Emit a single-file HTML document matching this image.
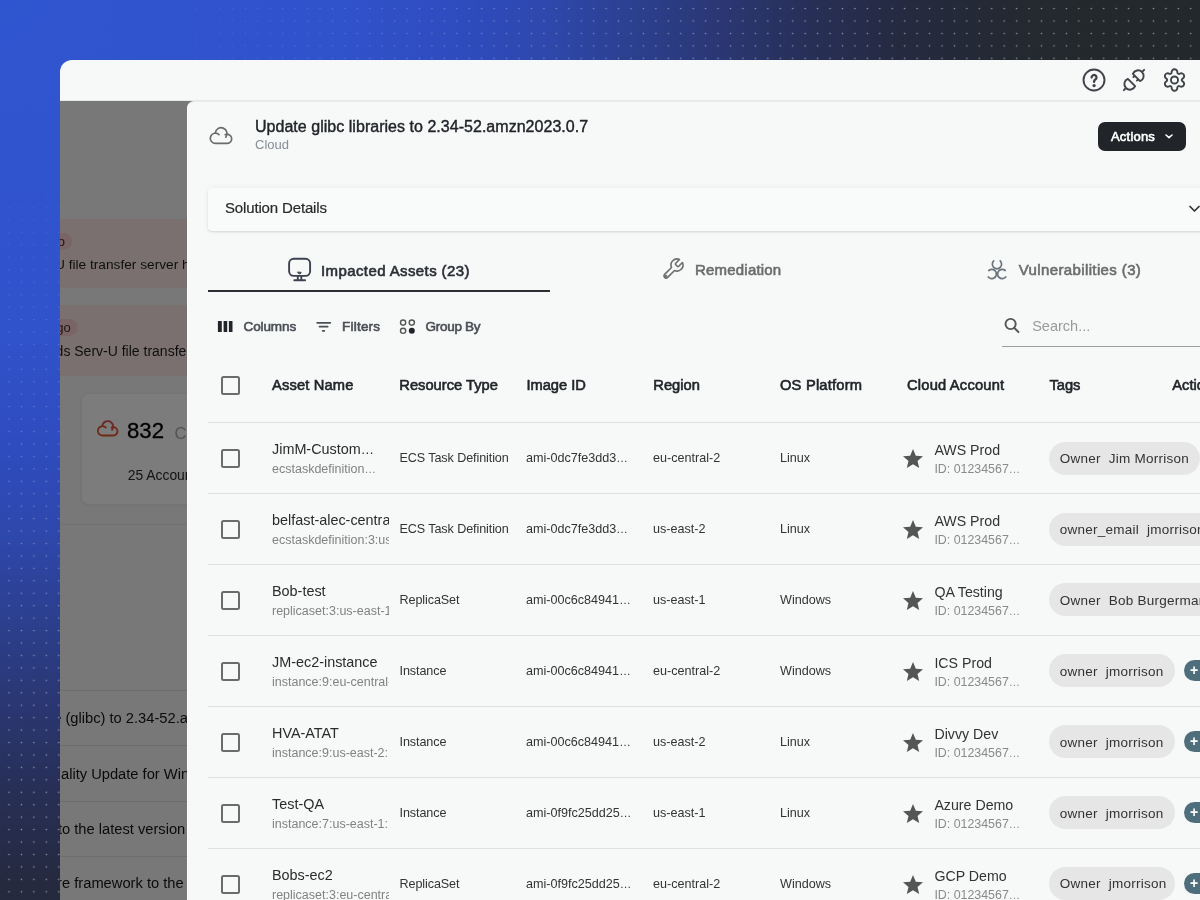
<!DOCTYPE html><html><head><meta charset="utf-8"><style>
*{margin:0;padding:0;box-sizing:border-box}
html,body{width:1200px;height:900px;overflow:hidden}
body{position:relative;font-family:"Liberation Sans",sans-serif;
 background:radial-gradient(ellipse 1090px 1060px at 0 0,#3055d0 0%,#3053cc 30%,#2f4cbf 42%,#2e48ad 50%,#2c4090 58%,#2a3670 67%,#272f55 75%,#252a40 83%,#23292e 96%,#23282c 100%);}
.dots{position:absolute;left:0;top:0;width:1200px;height:900px;
 -webkit-mask-image:radial-gradient(ellipse 1090px 1060px at 0 0, rgba(0,0,0,0.05) 15%, rgba(0,0,0,0.6) 45%, #000 75%);}
.t{position:absolute;white-space:nowrap}
.m{-webkit-text-stroke:0.6px currentColor}
.e{font-size:0.92em;letter-spacing:-0.2px}
.abs{position:absolute}
svg{position:absolute;overflow:visible}
.cb{position:absolute;width:18.7px;height:18.7px;border:2px solid #6b6b6b;border-radius:2.5px}
.hl{position:absolute;left:208px;width:1000px;height:1px;background:#e0e0e0}
.pill{position:absolute;height:33px;border-radius:17px;background:#e6e6e6}
.badge{position:absolute;height:21px;width:30px;border-radius:11px;background:#4f6e7c}
</style></head><body><div style="position:absolute;left:0;top:0;width:1200px;height:900px;overflow:hidden;will-change:transform">
<svg class="dots" width="1200" height="900" style="left:0;top:0"><defs><pattern id="dp" x="2.78" y="2.28" width="12.44" height="12.44" patternUnits="userSpaceOnUse"><circle cx="6.22" cy="6.22" r="0.8" fill="#fff" fill-opacity="0.5"/></pattern></defs><rect width="1200" height="900" fill="url(#dp)"/></svg>
<div class="abs" style="left:60px;top:60px;width:1200px;height:900px;background:#f7f8f8;border-top-left-radius:12px;overflow:hidden"></div>
<div class="abs" style="left:60px;top:100px;width:1200px;height:1px;background:#e6e7e7"></div>
<svg style="left:1080px;top:66px" width="28" height="28" viewBox="0 0 28 28" fill="none" stroke="#404449" stroke-width="1.9" stroke-linecap="round" stroke-linejoin="round"><circle cx="14" cy="14" r="10.5"/><path d="M11.6 11.5a2.45 2.45 0 1 1 3.7 2.1c-0.8 0.5 -1.2 1 -1.2 1.9v0.4" stroke-width="2.3"/><circle cx="14.1" cy="19.6" r="0.75" fill="#404449"/></svg>
<svg style="left:1120px;top:66px" width="28" height="28" viewBox="0 0 28 28" fill="none" stroke="#404449" stroke-width="1.9" stroke-linecap="round" stroke-linejoin="round"><path d="M7.86 12.86L15.14 20.14A5.6 5.6 0 1 1 7.86 12.86Z M5.98 22.02L3.86 24.14 M20.14 15.14L12.86 7.86A5.6 5.6 0 1 1 20.14 15.14Z M22.02 5.98L24.14 3.86 M14.74 9.73L13.39 11.07 M18.27 13.26L16.93 14.61"/></svg>
<svg style="left:1160px;top:66px" width="28" height="28" viewBox="0 0 28 28" fill="none" stroke="#404449" stroke-width="1.9" stroke-linecap="round" stroke-linejoin="round"><path d="M11.654 6.292 A2.85 2.85 0 1 1 17.346 6.292 A1.561 1.561 0 0 0 19.752 7.681 A2.85 2.85 0 1 1 22.599 12.611 A1.561 1.561 0 0 0 22.599 15.389 A2.85 2.85 0 1 1 19.752 20.319 A1.561 1.561 0 0 0 17.346 21.708 A2.85 2.85 0 1 1 11.654 21.708 A1.561 1.561 0 0 0 9.248 20.319 A2.85 2.85 0 1 1 6.401 15.389 A1.561 1.561 0 0 0 6.401 12.611 A2.85 2.85 0 1 1 9.248 7.681 A1.561 1.561 0 0 0 11.654 6.292Z"/><circle cx="14.5" cy="14" r="3.55"/></svg>
<div class="abs" style="left:60px;top:101px;width:137px;height:800px;background:#f5f5f5;overflow:hidden">
<div class="abs" style="left:-40px;top:118px;width:300px;height:69px;background:#fae4e4;border-radius:6px"></div>
<div class="abs" style="left:-40px;top:204px;width:300px;height:71px;background:#fae4e4;border-radius:6px"></div>
<div class="abs" style="left:-30px;top:131.6px;width:42px;height:17px;background:#f6cfcf;border-radius:9px"></div>
<div class="abs" style="left:-30px;top:218.3px;width:47.8px;height:17px;background:#f6cfcf;border-radius:9px"></div>
<div class="t" style="left:-9.50px;top:133.50px;font-size:13px;line-height:13px;color:#4a2a2a;font-weight:400;">go</div>
<div class="t" style="left:-3.70px;top:220.30px;font-size:13px;line-height:13px;color:#4a2a2a;font-weight:400;">go</div>
<div class="t" style="left:-5.00px;top:156.90px;font-size:13.7px;line-height:13.7px;color:#1e1e1e;font-weight:400;">U file transfer server has</div>
<div class="t" style="left:-4.40px;top:243.25px;font-size:14px;line-height:14px;color:#1e1e1e;font-weight:400;">ds Serv-U file transfer</div>
<div class="abs" style="left:20.8px;top:292px;width:200px;height:112px;background:#fcfcfc;border:1px solid #ececec;border-radius:8px;box-shadow:0 1px 3px rgba(0,0,0,0.06)"></div>
<svg style="left:31.5px;top:313.4px" width="34" height="30" viewBox="0 0 34 30" fill="none" stroke="#e4572e" stroke-width="2" stroke-linecap="round"><g transform="scale(0.92)"><path d="M15.01 14.69 A5.1 5.1 0 1 0 11.4 23.4 L23.1 23.4 A4.6 4.6 0 1 0 21.16 14.63"/><path d="M11.22 13.09 A5.9 5.9 0 1 1 21.75 17.23" stroke="#d9534f"/></g></svg>
<div class="t" style="left:67.00px;top:318.91px;font-size:22.2px;line-height:22.2px;color:#000;font-weight:400;-webkit-text-stroke:0.3px #000;">832</div>
<div class="t" style="left:114.60px;top:323.73px;font-size:16.5px;line-height:16.5px;color:#aaa;font-weight:400;">Cloud</div>
<div class="t" style="left:67.70px;top:368.23px;font-size:13.9px;line-height:13.9px;color:#2a2a2a;font-weight:400;">25 Accounts</div>
<div class="abs" style="left:0;top:423px;width:127px;height:1px;background:#e4e4e4"></div>
<div class="abs" style="left:0;top:589px;width:127px;height:1px;background:#dedede"></div>
<div class="abs" style="left:0;top:644.3px;width:127px;height:1px;background:#dedede"></div>
<div class="abs" style="left:0;top:699.5px;width:127px;height:1px;background:#dedede"></div>
<div class="abs" style="left:0;top:754.5px;width:127px;height:1px;background:#dedede"></div>
<div class="t" style="left:-6.80px;top:610.36px;font-size:14.7px;line-height:14.7px;color:#151515;font-weight:400;">e (glibc) to 2.34-52.amzn</div>
<div class="t" style="left:-7.20px;top:665.56px;font-size:14.7px;line-height:14.7px;color:#151515;font-weight:400;">uality Update for Windows</div>
<div class="t" style="left:-2.10px;top:720.56px;font-size:14.7px;line-height:14.7px;color:#151515;font-weight:400;">to the latest version</div>
<div class="t" style="left:-2.90px;top:774.56px;font-size:14.7px;line-height:14.7px;color:#151515;font-weight:400;">re framework to the</div>
</div>
<div class="abs" style="left:60px;top:101px;width:137px;height:800px;background:rgba(0,0,0,0.51)"></div>
<div class="abs" style="left:187px;top:101px;width:1100px;height:900px;background:#f7f8f8;border-top-left-radius:7px;border-left:1px solid #fdfdfd;border-top:1px solid #e9eaea"></div>
<svg style="left:204px;top:120px" width="34" height="30" viewBox="0 0 34 30" fill="none" stroke="#6b6b6b" stroke-width="1.65" stroke-linecap="round"><path d="M15.01 14.69 A5.1 5.1 0 1 0 11.4 23.4 L23.1 23.4 A4.6 4.6 0 1 0 21.16 14.63"/><path d="M11.22 13.09 A5.9 5.9 0 1 1 21.75 17.23"/></svg>
<div class="t m" style="left:255.00px;top:119.46px;font-size:16px;line-height:16px;color:#212529;font-weight:400;-webkit-text-stroke-width:0.4px;letter-spacing:0.03px;">Update glibc libraries to 2.34-52.amzn2023.0.7</div>
<div class="t" style="left:255.00px;top:138.00px;font-size:13px;line-height:13px;color:#868e96;font-weight:400;">Cloud</div>
<div class="abs" style="left:1098px;top:122px;width:88px;height:29px;background:#212529;border-radius:7px"></div>
<div class="t m" style="left:1111.00px;top:129.80px;font-size:13px;line-height:13px;color:#fff;font-weight:400;letter-spacing:0.2px;">Actions</div>
<svg style="left:1163px;top:131px" width="12" height="10" viewBox="0 0 12 10" fill="none" stroke="#fff" stroke-width="1.6" stroke-linecap="round" stroke-linejoin="round"><path d="M3 4l3 2.6l3 -2.6"/></svg>
<div class="abs" style="left:208px;top:188px;width:1100px;height:42.5px;background:#f9fafa;border-radius:4px;box-shadow:0 1px 2px rgba(0,0,0,0.12),0 0 7px rgba(0,0,0,0.05)"></div>
<div class="t m" style="left:225.00px;top:200.10px;font-size:15px;line-height:15px;color:#2a2a2a;font-weight:400;-webkit-text-stroke-width:0.2px;letter-spacing:-0.15px;">Solution Details</div>
<svg style="left:1186px;top:202px" width="16" height="14" viewBox="0 0 16 14" fill="none" stroke="#333" stroke-width="1.7" stroke-linecap="round" stroke-linejoin="round"><path d="M4 4.5l4.5 4.5l4.5 -4.5"/></svg>
<div class="abs" style="left:208px;top:289.5px;width:342px;height:2px;background:#2b2f33"></div>
<svg style="left:282px;top:254px" width="34" height="32" viewBox="0 0 34 32" fill="none" stroke="#3d4250" stroke-width="1.9" stroke-linecap="round" stroke-linejoin="round"><rect x="7.1" y="4.8" width="21" height="17.1" rx="4.6"/><path d="M15.8 22.5v3.6 M19.3 22.5v3.6 M12.3 26.3h10.8"/><path d="M15.8 18.2h3.4a1.7 1.7 0 0 1 -3.4 0z" fill="#3d4250" stroke-width="0.8"/></svg>
<div class="t m" style="left:321.00px;top:262.70px;font-size:15px;line-height:15px;color:#2b2f36;font-weight:400;letter-spacing:0.4px;">Impacted Assets (23)</div>
<svg style="left:661.2px;top:257px" width="24" height="24" viewBox="0 0 24 24" fill="none" stroke="#6c6c6c" stroke-width="1.6" stroke-linecap="round" stroke-linejoin="round"><path d="M14.7 6.3a1 1 0 0 0 0 1.4l1.6 1.6a1 1 0 0 0 1.4 0l3.77-3.77a6 6 0 0 1-7.94 7.94l-6.91 6.91a2.12 2.12 0 0 1-3-3l6.91-6.91a6 6 0 0 1 7.94-7.94l-3.76 3.76z"/><circle cx="5.1" cy="18.9" r="0.45" fill="#6c6c6c"/></svg>
<div class="t m" style="left:695.00px;top:261.70px;font-size:15px;line-height:15px;color:#6c6c6c;font-weight:400;letter-spacing:0.2px;">Remediation</div>
<svg style="left:982px;top:255px" width="30" height="28" viewBox="0 0 30 28" fill="none" stroke="#6c757d" stroke-width="1.7" stroke-linecap="round"><path d="M11.70 5.95 A4.6 4.6 0 1 0 18.20 5.95"/><path d="M6.84 15.48 A4.6 4.6 0 1 1 6.28 21.96"/><path d="M23.16 15.48 A4.6 4.6 0 1 0 23.72 21.96"/></svg>
<div class="t m" style="left:1018.70px;top:262.00px;font-size:15px;line-height:15px;color:#6c6c6c;font-weight:400;letter-spacing:0.38px;">Vulnerabilities (3)</div>
<svg style="left:212px;top:314px" width="30" height="26" viewBox="0 0 30 26" fill="#212529"><rect x="5.9" y="6.9" width="3.9" height="11.2" rx="0.6"/><rect x="11.6" y="6.9" width="3.6" height="11.2" rx="0.6"/><rect x="16.9" y="6.9" width="3.6" height="11.2" rx="0.6"/></svg>
<div class="t m" style="left:243.50px;top:320.17px;font-size:13.5px;line-height:13.5px;color:#4a4f55;font-weight:400;letter-spacing:-0.1px;">Columns</div>
<svg style="left:310px;top:312px" width="30" height="30" viewBox="0 0 30 30" fill="none" stroke="#4a4f55" stroke-width="1.8" stroke-linecap="round"><path d="M7.2 10.8h13.1 M9.6 14.7h8 M12.7 18.8h1.6"/></svg>
<div class="t m" style="left:342.10px;top:319.87px;font-size:13.5px;line-height:13.5px;color:#4a4f55;font-weight:400;letter-spacing:0.2px;">Filters</div>
<svg style="left:396px;top:316px" width="24" height="24" viewBox="0 0 24 24"><circle cx="7.1" cy="6.6" r="2.6" fill="none" stroke="#555" stroke-width="1.4"/><circle cx="15.8" cy="6.6" r="2.6" fill="none" stroke="#555" stroke-width="1.4"/><circle cx="7.1" cy="14.8" r="2.6" fill="none" stroke="#555" stroke-width="1.4"/><circle cx="15.8" cy="14.8" r="3.0" fill="#212529"/></svg>
<div class="t m" style="left:425.60px;top:320.17px;font-size:13.5px;line-height:13.5px;color:#4a4f55;font-weight:400;letter-spacing:-0.3px;">Group By</div>
<svg style="left:995px;top:308px" width="30" height="30" viewBox="0 0 30 30" fill="none" stroke="#555" stroke-width="1.9" stroke-linecap="round"><circle cx="15.6" cy="16" r="5.1"/><path d="M19.4 20l4 4"/></svg>
<div class="t" style="left:1032.20px;top:318.73px;font-size:14.5px;line-height:14.5px;color:#9a9a9a;font-weight:400;">Search...</div>
<div class="abs" style="left:1002px;top:345.5px;width:200px;height:1.2px;background:#9e9e9e"></div>
<div class="cb" style="left:221.3px;top:376px"></div>
<div class="t m" style="left:272.00px;top:378.06px;font-size:14.7px;line-height:14.7px;color:#212529;font-weight:400;letter-spacing:0.15px;">Asset Name</div>
<div class="t m" style="left:399.30px;top:378.06px;font-size:14.7px;line-height:14.7px;color:#212529;font-weight:400;">Resource Type</div>
<div class="t m" style="left:526.40px;top:378.06px;font-size:14.7px;line-height:14.7px;color:#212529;font-weight:400;">Image ID</div>
<div class="t m" style="left:653.30px;top:378.06px;font-size:14.7px;line-height:14.7px;color:#212529;font-weight:400;">Region</div>
<div class="t m" style="left:780.00px;top:378.06px;font-size:14.7px;line-height:14.7px;color:#212529;font-weight:400;letter-spacing:0.2px;">OS Platform</div>
<div class="t m" style="left:907.00px;top:378.06px;font-size:14.7px;line-height:14.7px;color:#212529;font-weight:400;letter-spacing:0.2px;">Cloud Account</div>
<div class="t m" style="left:1049.40px;top:378.06px;font-size:14.7px;line-height:14.7px;color:#212529;font-weight:400;">Tags</div>
<div class="t m" style="left:1172.30px;top:378.06px;font-size:14.7px;line-height:14.7px;color:#212529;font-weight:400;">Actions</div>
<div class="hl" style="top:422.1px"></div>
<div class="cb" style="left:221.3px;top:449.48px"></div>
<div class="abs" style="left:272px;top:422.10px;width:117px;height:70.95px;overflow:hidden">
<div class="t" style="left:0.00px;top:20.39px;font-size:14.4px;line-height:14.4px;color:#2b2b2b;font-weight:400;">JimM-Custom<span class="e">…</span></div>
<div class="t" style="left:0.00px;top:40.99px;font-size:12.5px;line-height:12.5px;color:#828282;font-weight:400;">ecstaskdefinition<span class="e">…</span></div>
</div>
<div class="t" style="left:399.50px;top:452.01px;font-size:12.6px;line-height:12.6px;color:#333;font-weight:400;letter-spacing:-0.1px;">ECS Task Definition</div>
<div class="t" style="left:526.00px;top:452.01px;font-size:12.6px;line-height:12.6px;color:#333;font-weight:400;">ami-0dc7fe3dd3<span class="e">…</span></div>
<div class="t" style="left:653.00px;top:452.01px;font-size:12.6px;line-height:12.6px;color:#333;font-weight:400;">eu-central-2</div>
<div class="t" style="left:780.00px;top:452.01px;font-size:12.6px;line-height:12.6px;color:#333;font-weight:400;">Linux</div>
<svg style="left:900.6px;top:447.18px" width="24" height="24" viewBox="0 0 24 24"><path d="M12 17.27L18.18 21l-1.64-7.03L22 9.24l-7.19-.61L12 2 9.19 8.63 2 9.24l5.46 4.73L5.82 21z" fill="#555"/></svg>
<div class="t" style="left:934.40px;top:442.85px;font-size:14.2px;line-height:14.2px;color:#333;font-weight:400;">AWS Prod</div>
<div class="t" style="left:934.40px;top:462.88px;font-size:12.4px;line-height:12.4px;color:#8a8a8a;font-weight:400;">ID: 01234567<span class="e">…</span></div>
<div class="pill" style="left:1048.5px;top:441.58px;width:151px"></div>
<div class="t" style="left:1059.70px;top:451.75px;font-size:13.5px;line-height:13.5px;color:#333;font-weight:400;letter-spacing:0.25px;">Owner&nbsp; Jim Morrison</div>
<div class="hl" style="top:493.05px"></div>
<div class="cb" style="left:221.3px;top:520.42px"></div>
<div class="abs" style="left:272px;top:493.05px;width:117px;height:70.95px;overflow:hidden">
<div class="t" style="left:0.00px;top:20.39px;font-size:14.4px;line-height:14.4px;color:#2b2b2b;font-weight:400;">belfast-alec-central</div>
<div class="t" style="left:0.00px;top:40.99px;font-size:12.5px;line-height:12.5px;color:#828282;font-weight:400;">ecstaskdefinition:3:us</div>
</div>
<div class="t" style="left:399.50px;top:522.96px;font-size:12.6px;line-height:12.6px;color:#333;font-weight:400;letter-spacing:-0.1px;">ECS Task Definition</div>
<div class="t" style="left:526.00px;top:522.96px;font-size:12.6px;line-height:12.6px;color:#333;font-weight:400;">ami-0dc7fe3dd3<span class="e">…</span></div>
<div class="t" style="left:653.00px;top:522.96px;font-size:12.6px;line-height:12.6px;color:#333;font-weight:400;">us-east-2</div>
<div class="t" style="left:780.00px;top:522.96px;font-size:12.6px;line-height:12.6px;color:#333;font-weight:400;">Linux</div>
<svg style="left:900.6px;top:518.12px" width="24" height="24" viewBox="0 0 24 24"><path d="M12 17.27L18.18 21l-1.64-7.03L22 9.24l-7.19-.61L12 2 9.19 8.63 2 9.24l5.46 4.73L5.82 21z" fill="#555"/></svg>
<div class="t" style="left:934.40px;top:513.80px;font-size:14.2px;line-height:14.2px;color:#333;font-weight:400;">AWS Prod</div>
<div class="t" style="left:934.40px;top:533.83px;font-size:12.4px;line-height:12.4px;color:#8a8a8a;font-weight:400;">ID: 01234567<span class="e">…</span></div>
<div class="pill" style="left:1048.5px;top:512.52px;width:200px"></div>
<div class="t" style="left:1059.70px;top:522.70px;font-size:13.5px;line-height:13.5px;color:#333;font-weight:400;letter-spacing:0.25px;">owner_email&nbsp; jmorrison</div>
<div class="hl" style="top:564.00px"></div>
<div class="cb" style="left:221.3px;top:591.38px"></div>
<div class="abs" style="left:272px;top:564.00px;width:117px;height:70.95px;overflow:hidden">
<div class="t" style="left:0.00px;top:20.39px;font-size:14.4px;line-height:14.4px;color:#2b2b2b;font-weight:400;">Bob-test</div>
<div class="t" style="left:0.00px;top:40.99px;font-size:12.5px;line-height:12.5px;color:#828282;font-weight:400;">replicaset:3:us-east-1</div>
</div>
<div class="t" style="left:399.50px;top:593.91px;font-size:12.6px;line-height:12.6px;color:#333;font-weight:400;letter-spacing:-0.1px;">ReplicaSet</div>
<div class="t" style="left:526.00px;top:593.91px;font-size:12.6px;line-height:12.6px;color:#333;font-weight:400;">ami-00c6c84941<span class="e">…</span></div>
<div class="t" style="left:653.00px;top:593.91px;font-size:12.6px;line-height:12.6px;color:#333;font-weight:400;">us-east-1</div>
<div class="t" style="left:780.00px;top:593.91px;font-size:12.6px;line-height:12.6px;color:#333;font-weight:400;">Windows</div>
<svg style="left:900.6px;top:589.08px" width="24" height="24" viewBox="0 0 24 24"><path d="M12 17.27L18.18 21l-1.64-7.03L22 9.24l-7.19-.61L12 2 9.19 8.63 2 9.24l5.46 4.73L5.82 21z" fill="#555"/></svg>
<div class="t" style="left:934.40px;top:584.75px;font-size:14.2px;line-height:14.2px;color:#333;font-weight:400;">QA Testing</div>
<div class="t" style="left:934.40px;top:604.78px;font-size:12.4px;line-height:12.4px;color:#8a8a8a;font-weight:400;">ID: 01234567<span class="e">…</span></div>
<div class="pill" style="left:1048.5px;top:583.48px;width:200px"></div>
<div class="t" style="left:1059.70px;top:593.65px;font-size:13.5px;line-height:13.5px;color:#333;font-weight:400;letter-spacing:0.25px;">Owner&nbsp; Bob Burgerman</div>
<div class="hl" style="top:634.95px"></div>
<div class="cb" style="left:221.3px;top:662.33px"></div>
<div class="abs" style="left:272px;top:634.95px;width:117px;height:70.95px;overflow:hidden">
<div class="t" style="left:0.00px;top:20.39px;font-size:14.4px;line-height:14.4px;color:#2b2b2b;font-weight:400;">JM-ec2-instance</div>
<div class="t" style="left:0.00px;top:40.99px;font-size:12.5px;line-height:12.5px;color:#828282;font-weight:400;">instance:9:eu-central-1</div>
</div>
<div class="t" style="left:399.50px;top:664.86px;font-size:12.6px;line-height:12.6px;color:#333;font-weight:400;letter-spacing:-0.1px;">Instance</div>
<div class="t" style="left:526.00px;top:664.86px;font-size:12.6px;line-height:12.6px;color:#333;font-weight:400;">ami-00c6c84941<span class="e">…</span></div>
<div class="t" style="left:653.00px;top:664.86px;font-size:12.6px;line-height:12.6px;color:#333;font-weight:400;">eu-central-2</div>
<div class="t" style="left:780.00px;top:664.86px;font-size:12.6px;line-height:12.6px;color:#333;font-weight:400;">Windows</div>
<svg style="left:900.6px;top:660.03px" width="24" height="24" viewBox="0 0 24 24"><path d="M12 17.27L18.18 21l-1.64-7.03L22 9.24l-7.19-.61L12 2 9.19 8.63 2 9.24l5.46 4.73L5.82 21z" fill="#555"/></svg>
<div class="t" style="left:934.40px;top:655.70px;font-size:14.2px;line-height:14.2px;color:#333;font-weight:400;">ICS Prod</div>
<div class="t" style="left:934.40px;top:675.73px;font-size:12.4px;line-height:12.4px;color:#8a8a8a;font-weight:400;">ID: 01234567<span class="e">…</span></div>
<div class="pill" style="left:1048.5px;top:654.43px;width:126px"></div>
<div class="t" style="left:1059.70px;top:664.60px;font-size:13.5px;line-height:13.5px;color:#333;font-weight:400;letter-spacing:0.25px;">owner&nbsp; jmorrison</div>
<div class="badge" style="left:1184px;top:660.03px"></div>
<div class="t" style="left:1190.00px;top:663.07px;font-size:14px;line-height:14px;color:#fff;font-weight:700;">+</div>
<div class="hl" style="top:705.90px"></div>
<div class="cb" style="left:221.3px;top:733.28px"></div>
<div class="abs" style="left:272px;top:705.90px;width:117px;height:70.95px;overflow:hidden">
<div class="t" style="left:0.00px;top:20.39px;font-size:14.4px;line-height:14.4px;color:#2b2b2b;font-weight:400;">HVA-ATAT</div>
<div class="t" style="left:0.00px;top:40.99px;font-size:12.5px;line-height:12.5px;color:#828282;font-weight:400;">instance:9:us-east-2:1</div>
</div>
<div class="t" style="left:399.50px;top:735.81px;font-size:12.6px;line-height:12.6px;color:#333;font-weight:400;letter-spacing:-0.1px;">Instance</div>
<div class="t" style="left:526.00px;top:735.81px;font-size:12.6px;line-height:12.6px;color:#333;font-weight:400;">ami-00c6c84941<span class="e">…</span></div>
<div class="t" style="left:653.00px;top:735.81px;font-size:12.6px;line-height:12.6px;color:#333;font-weight:400;">us-east-2</div>
<div class="t" style="left:780.00px;top:735.81px;font-size:12.6px;line-height:12.6px;color:#333;font-weight:400;">Linux</div>
<svg style="left:900.6px;top:730.98px" width="24" height="24" viewBox="0 0 24 24"><path d="M12 17.27L18.18 21l-1.64-7.03L22 9.24l-7.19-.61L12 2 9.19 8.63 2 9.24l5.46 4.73L5.82 21z" fill="#555"/></svg>
<div class="t" style="left:934.40px;top:726.65px;font-size:14.2px;line-height:14.2px;color:#333;font-weight:400;">Divvy Dev</div>
<div class="t" style="left:934.40px;top:746.68px;font-size:12.4px;line-height:12.4px;color:#8a8a8a;font-weight:400;">ID: 01234567<span class="e">…</span></div>
<div class="pill" style="left:1048.5px;top:725.38px;width:126px"></div>
<div class="t" style="left:1059.70px;top:735.55px;font-size:13.5px;line-height:13.5px;color:#333;font-weight:400;letter-spacing:0.25px;">owner&nbsp; jmorrison</div>
<div class="badge" style="left:1184px;top:730.98px"></div>
<div class="t" style="left:1190.00px;top:734.02px;font-size:14px;line-height:14px;color:#fff;font-weight:700;">+</div>
<div class="hl" style="top:776.85px"></div>
<div class="cb" style="left:221.3px;top:804.23px"></div>
<div class="abs" style="left:272px;top:776.85px;width:117px;height:70.95px;overflow:hidden">
<div class="t" style="left:0.00px;top:20.39px;font-size:14.4px;line-height:14.4px;color:#2b2b2b;font-weight:400;">Test-QA</div>
<div class="t" style="left:0.00px;top:40.99px;font-size:12.5px;line-height:12.5px;color:#828282;font-weight:400;">instance:7:us-east-1:1</div>
</div>
<div class="t" style="left:399.50px;top:806.76px;font-size:12.6px;line-height:12.6px;color:#333;font-weight:400;letter-spacing:-0.1px;">Instance</div>
<div class="t" style="left:526.00px;top:806.76px;font-size:12.6px;line-height:12.6px;color:#333;font-weight:400;">ami-0f9fc25dd25<span class="e">…</span></div>
<div class="t" style="left:653.00px;top:806.76px;font-size:12.6px;line-height:12.6px;color:#333;font-weight:400;">us-east-1</div>
<div class="t" style="left:780.00px;top:806.76px;font-size:12.6px;line-height:12.6px;color:#333;font-weight:400;">Linux</div>
<svg style="left:900.6px;top:801.93px" width="24" height="24" viewBox="0 0 24 24"><path d="M12 17.27L18.18 21l-1.64-7.03L22 9.24l-7.19-.61L12 2 9.19 8.63 2 9.24l5.46 4.73L5.82 21z" fill="#555"/></svg>
<div class="t" style="left:934.40px;top:797.60px;font-size:14.2px;line-height:14.2px;color:#333;font-weight:400;">Azure Demo</div>
<div class="t" style="left:934.40px;top:817.63px;font-size:12.4px;line-height:12.4px;color:#8a8a8a;font-weight:400;">ID: 01234567<span class="e">…</span></div>
<div class="pill" style="left:1048.5px;top:796.33px;width:126px"></div>
<div class="t" style="left:1059.70px;top:806.50px;font-size:13.5px;line-height:13.5px;color:#333;font-weight:400;letter-spacing:0.25px;">owner&nbsp; jmorrison</div>
<div class="badge" style="left:1184px;top:801.93px"></div>
<div class="t" style="left:1190.00px;top:804.97px;font-size:14px;line-height:14px;color:#fff;font-weight:700;">+</div>
<div class="hl" style="top:847.80px"></div>
<div class="cb" style="left:221.3px;top:875.18px"></div>
<div class="abs" style="left:272px;top:847.80px;width:117px;height:70.95px;overflow:hidden">
<div class="t" style="left:0.00px;top:20.39px;font-size:14.4px;line-height:14.4px;color:#2b2b2b;font-weight:400;">Bobs-ec2</div>
<div class="t" style="left:0.00px;top:40.99px;font-size:12.5px;line-height:12.5px;color:#828282;font-weight:400;">replicaset:3:eu-central</div>
</div>
<div class="t" style="left:399.50px;top:877.71px;font-size:12.6px;line-height:12.6px;color:#333;font-weight:400;letter-spacing:-0.1px;">ReplicaSet</div>
<div class="t" style="left:526.00px;top:877.71px;font-size:12.6px;line-height:12.6px;color:#333;font-weight:400;">ami-0f9fc25dd25<span class="e">…</span></div>
<div class="t" style="left:653.00px;top:877.71px;font-size:12.6px;line-height:12.6px;color:#333;font-weight:400;">eu-central-2</div>
<div class="t" style="left:780.00px;top:877.71px;font-size:12.6px;line-height:12.6px;color:#333;font-weight:400;">Windows</div>
<svg style="left:900.6px;top:872.88px" width="24" height="24" viewBox="0 0 24 24"><path d="M12 17.27L18.18 21l-1.64-7.03L22 9.24l-7.19-.61L12 2 9.19 8.63 2 9.24l5.46 4.73L5.82 21z" fill="#555"/></svg>
<div class="t" style="left:934.40px;top:868.55px;font-size:14.2px;line-height:14.2px;color:#333;font-weight:400;">GCP Demo</div>
<div class="t" style="left:934.40px;top:888.58px;font-size:12.4px;line-height:12.4px;color:#8a8a8a;font-weight:400;">ID: 01234567<span class="e">…</span></div>
<div class="pill" style="left:1048.5px;top:867.28px;width:126px"></div>
<div class="t" style="left:1059.70px;top:877.45px;font-size:13.5px;line-height:13.5px;color:#333;font-weight:400;letter-spacing:0.25px;">Owner&nbsp; jmorrison</div>
<div class="badge" style="left:1184px;top:872.88px"></div>
<div class="t" style="left:1190.00px;top:875.92px;font-size:14px;line-height:14px;color:#fff;font-weight:700;">+</div>
<div class="hl" style="top:918.75px"></div>
</div></body></html>
